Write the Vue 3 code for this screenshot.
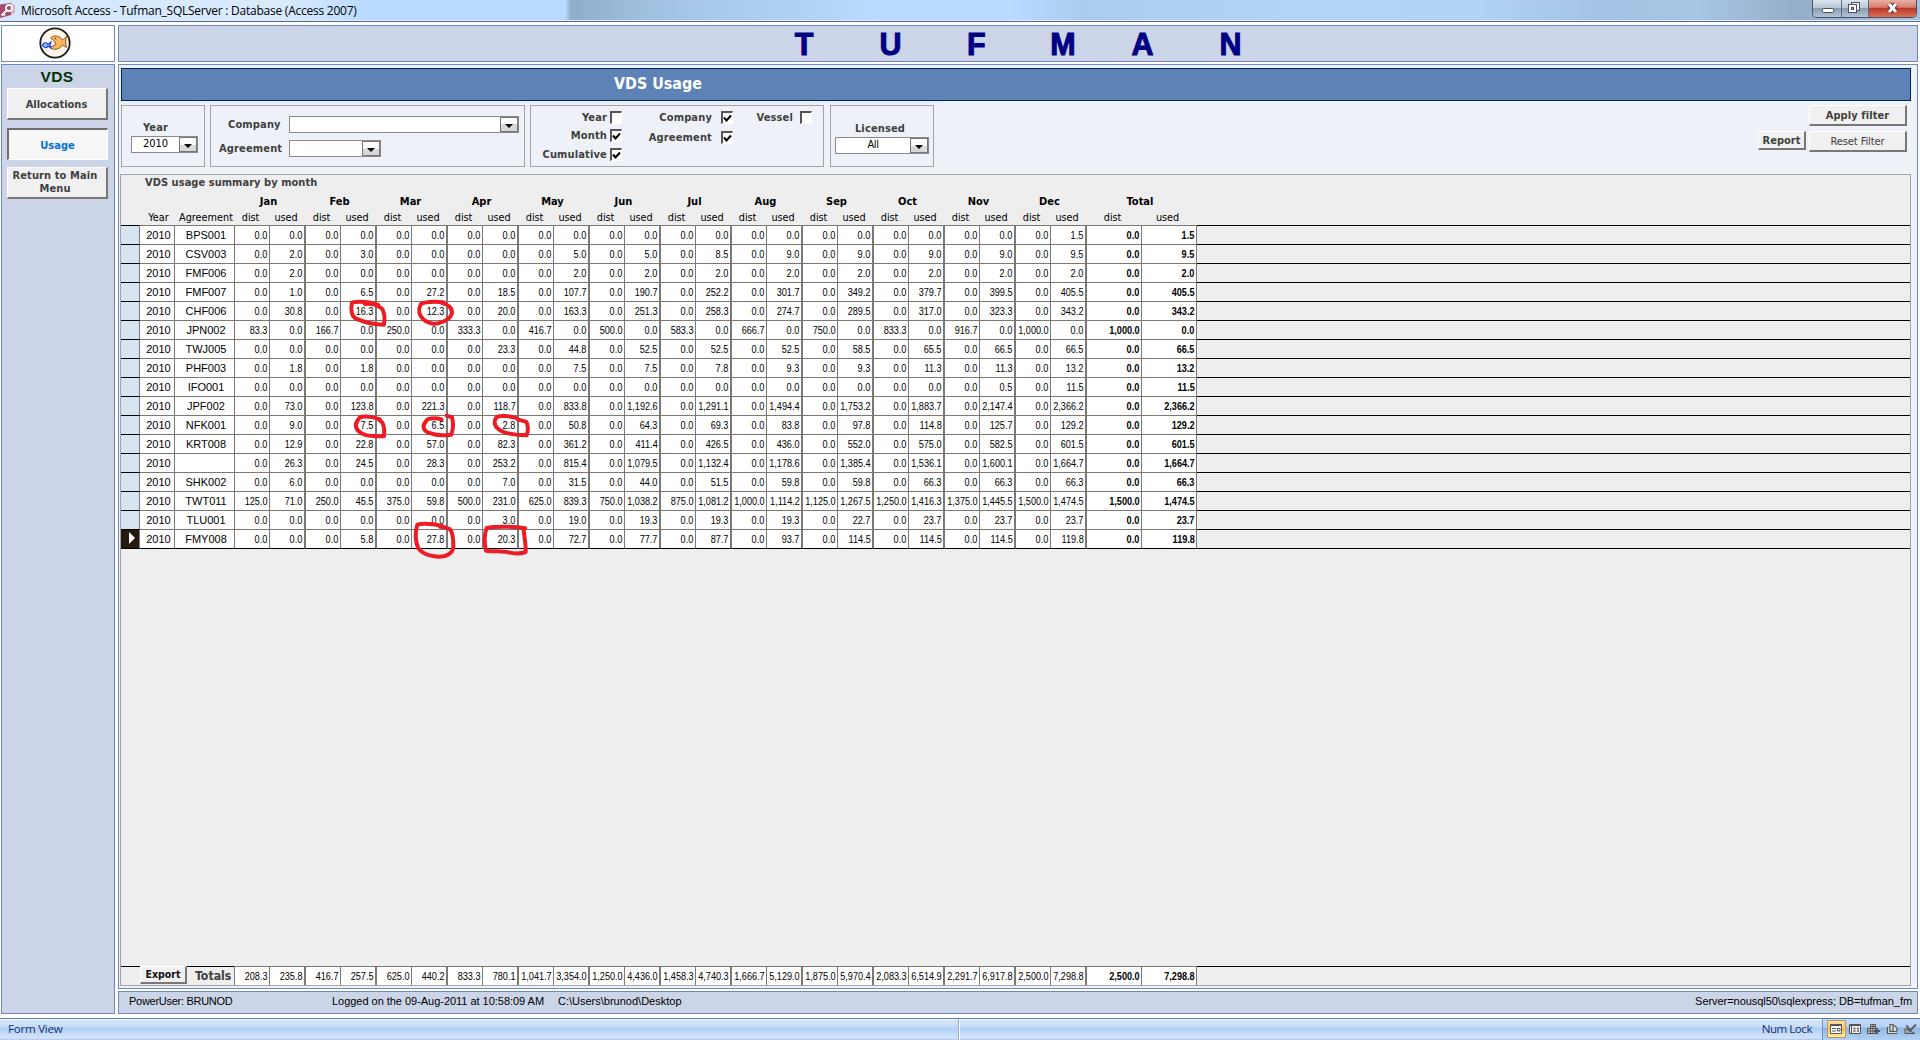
<script setup>
const months = ['Jan', 'Feb', 'Mar', 'Apr', 'May', 'Jun', 'Jul', 'Aug', 'Sep', 'Oct', 'Nov', 'Dec']
const zeros = '0.0 0.0 0.0 0.0 0.0 0.0 0.0 0.0 0.0 0.0 0.0 0.0'

// code | distributed days by month | used days by month | total dist | total used
const source = [
  ['BPS001', zeros, '0.0 0.0 0.0 0.0 0.0 0.0 0.0 0.0 0.0 0.0 0.0 1.5', '0.0', '1.5'],
  ['CSV003', zeros, '2.0 3.0 0.0 0.0 5.0 5.0 8.5 9.0 9.0 9.0 9.0 9.5', '0.0', '9.5'],
  ['FMF006', zeros, '2.0 0.0 0.0 0.0 2.0 2.0 2.0 2.0 2.0 2.0 2.0 2.0', '0.0', '2.0'],
  ['FMF007', zeros, '1.0 6.5 27.2 18.5 107.7 190.7 252.2 301.7 349.2 379.7 399.5 405.5', '0.0', '405.5'],
  ['CHF006', zeros, '30.8 16.3 12.3 20.0 163.3 251.3 258.3 274.7 289.5 317.0 323.3 343.2', '0.0', '343.2'],
  ['JPN002', '83.3 166.7 250.0 333.3 416.7 500.0 583.3 666.7 750.0 833.3 916.7 1,000.0', zeros, '1,000.0', '0.0'],
  ['TWJ005', zeros, '0.0 0.0 0.0 23.3 44.8 52.5 52.5 52.5 58.5 65.5 66.5 66.5', '0.0', '66.5'],
  ['PHF003', zeros, '1.8 1.8 0.0 0.0 7.5 7.5 7.8 9.3 9.3 11.3 11.3 13.2', '0.0', '13.2'],
  ['IFO001', zeros, '0.0 0.0 0.0 0.0 0.0 0.0 0.0 0.0 0.0 0.0 0.5 11.5', '0.0', '11.5'],
  ['JPF002', zeros, '73.0 123.8 221.3 118.7 833.8 1,192.6 1,291.1 1,494.4 1,753.2 1,883.7 2,147.4 2,366.2', '0.0', '2,366.2'],
  ['NFK001', zeros, '9.0 7.5 6.5 2.8 50.8 64.3 69.3 83.8 97.8 114.8 125.7 129.2', '0.0', '129.2'],
  ['KRT008', zeros, '12.9 22.8 57.0 82.3 361.2 411.4 426.5 436.0 552.0 575.0 582.5 601.5', '0.0', '601.5'],
  ['', zeros, '26.3 24.5 28.3 253.2 815.4 1,079.5 1,132.4 1,178.6 1,385.4 1,536.1 1,600.1 1,664.7', '0.0', '1,664.7'],
  ['SHK002', zeros, '6.0 0.0 0.0 7.0 31.5 44.0 51.5 59.8 59.8 66.3 66.3 66.3', '0.0', '66.3'],
  ['TWT011', '125.0 250.0 375.0 500.0 625.0 750.0 875.0 1,000.0 1,125.0 1,250.0 1,375.0 1,500.0', '71.0 45.5 59.8 231.0 839.3 1,038.2 1,081.2 1,114.2 1,267.5 1,416.3 1,445.5 1,474.5', '1,500.0', '1,474.5'],
  ['TLU001', zeros, '0.0 0.0 0.0 3.0 19.0 19.3 19.3 19.3 22.7 23.7 23.7 23.7', '0.0', '23.7'],
  ['FMY008', zeros, '0.0 5.8 27.8 20.3 72.7 77.7 87.7 93.7 114.5 114.5 114.5 119.8', '0.0', '119.8'],
]

function interleave(dist, used) {
  const d = dist.split(' ')
  const u = used.split(' ')
  return d.flatMap((v, i) => [v, u[i]])
}

const rows = source.map(([code, dist, used, td, tu]) => ({ code, cells: interleave(dist, used), td, tu }))
const totals = interleave(
  '208.3 416.7 625.0 833.3 1,041.7 1,250.0 1,458.3 1,666.7 1,875.0 2,083.3 2,291.7 2,500.0',
  '235.8 257.5 440.2 780.1 3,354.0 4,436.0 4,740.3 5,129.0 5,970.4 6,514.9 6,917.8 7,298.8',
)
const letters = ['T', 'U', 'F', 'M', 'A', 'N']
const groups = [
  [['Year', false], ['Month', true], ['Cumulative', true]],
  [['Company', true], ['Agreement', true]],
  [['Vessel', false]],
]
</script>

<template>
  <div class="window">
    <header class="titlebar">
      <svg class="app-icon" width="16" height="18" viewBox="0 0 16 18">
        <path d="M0 3.500 L11 2 V14 L0 17 Z" fill="#a8486a" />
        <path d="M11 2 L15 4 V12 L11 14 Z" fill="#d9b3c0" />
        <circle cx="9" cy="7" r="3" fill="#a8486a" stroke="#fff" stroke-width="1.8" />
        <path d="M7 9 L1.500 14.500 M3 12.500 L5 14.500" stroke="#fff" stroke-width="1.8" />
      </svg>
      <span class="caption">Microsoft Access - Tufman_SQLServer : Database (Access 2007)</span>
      <div class="controls">
        <span class="ctl min">
          <svg width="28" height="17"><rect x="9.5" y="8.5" width="11" height="4" rx="1" fill="#fff" stroke="#4a5362" /></svg>
        </span>
        <span class="ctl max">
          <svg width="26" height="17">
            <rect x="9.5" y="2.5" width="8" height="8" fill="#eef" stroke="#4a5362" />
            <rect x="6.5" y="4.5" width="8" height="8" fill="#fff" stroke="#4a5362" />
            <rect x="9.5" y="7.5" width="2" height="2" fill="#9ab" stroke="#4a5362" />
          </svg>
        </span>
        <span class="ctl close">
          <svg width="47" height="17">
            <path d="M20 4 L27 12 M27 4 L20 12" stroke="#5a3038" stroke-width="5" />
            <path d="M20 4 L27 12 M27 4 L20 12" stroke="#fff" stroke-width="3" />
          </svg>
        </span>
      </div>
    </header>

    <div class="workspace">
      <aside class="left">
        <div class="logo">
          <svg width="32" height="32" viewBox="0 0 32 32">
            <circle cx="16" cy="16" r="14.7" fill="#fdf6ea" stroke="#1c1c1c" stroke-width="1.8" />
            <path d="M11.500 11 C13 8.500 20 7.500 23.500 13 L27.500 9.500 L26.500 15 L27.500 20.500 L23.500 18 C20 23.500 14 23 11 20.500 L17 17.500 L15.500 14 Z" fill="#fbb45a" stroke="#8a6030" stroke-width="1" stroke-linejoin="round" />
            <circle cx="16.500" cy="11.500" r="0.8" fill="#333" />
            <path d="M3.500 18 C4.500 15 8 15 9 17.500 L12 15 L11 18.200 L12 21 L9 19 C8 21.500 4.500 21 3.500 18 Z" fill="#7dc4f5" stroke="#1c35e8" stroke-width="1.1" />
          </svg>
        </div>
        <nav class="side">
          <h2>VDS</h2>
          <button class="nav-btn">Allocations</button>
          <button class="nav-btn active">Usage</button>
          <button class="nav-btn home">Return to Main Menu</button>
        </nav>
      </aside>

      <div class="right">
        <div class="brand"><span v-for="l in letters" :key="l">{{ l }}</span></div>

        <main class="main">
          <h1>VDS Usage</h1>

          <section class="filters">
            <div class="box year">
              <label>Year</label>
              <div class="combo"><span>2010</span><i></i></div>
            </div>
            <div class="box company">
              <div class="line"><label>Company</label><div class="combo wide"><span></span><i></i></div></div>
              <div class="line"><label>Agreement</label><div class="combo mid"><span></span><i></i></div></div>
            </div>
            <div class="box checks">
              <div v-for="(g, gi) in groups" :key="gi" class="group">
                <div v-for="[name, on] in g" :key="name" class="check">
                  <label>{{ name }}</label>
                  <span class="tick"><svg v-if="on" width="9" height="9" viewBox="0 0 9 9"><path d="M1 3.500 L3.500 6.500 L8 1.500" fill="none" stroke="#000" stroke-width="2" /></svg></span>
                </div>
              </div>
            </div>
            <div class="box licensed">
              <label>Licensed</label>
              <div class="combo"><span class="narrow">All</span><i></i></div>
            </div>
            <div class="actions">
              <button class="btn report">Report</button>
              <div class="stack">
                <button class="btn apply">Apply filter</button>
                <button class="btn reset">Reset Filter</button>
              </div>
            </div>
          </section>

          <section class="sheet">
            <h3>VDS usage summary by month</h3>
            <div class="months">
              <b v-for="m in months" :key="m">{{ m }}</b>
              <b class="tot">Total</b>
            </div>
            <div class="grid heads">
              <span></span><span class="h-text">Year</span><span class="h-text">Agreement</span>
              <template v-for="m in months" :key="m"><span>dist</span><span class="h-used">used</span></template>
              <span>dist</span><span class="h-used">used</span>
            </div>
            <div class="body">
              <div v-for="(r, ri) in rows" :key="ri" class="grid row">
                <span class="sel" :class="{ current: ri === rows.length - 1 }">
                  <svg v-if="ri === rows.length - 1" width="8" height="12"><path d="M1 0 L7 6 L1 12 Z" fill="#fff" /></svg>
                </span>
                <span class="cell txt">2010</span>
                <span class="cell txt">{{ r.code }}</span>
                <span v-for="(c, ci) in r.cells" :key="ci" class="cell num" :class="{ thick: ci % 2 }"><span>{{ c }}</span></span>
                <span class="cell num strong"><span>{{ r.td }}</span></span>
                <span class="cell num strong"><span>{{ r.tu }}</span></span>
                <span class="rest"></span>
              </div>
            </div>
            <div class="grid row totals">
              <span class="pad"></span>
              <span class="tlabel"><button class="btn export">Export</button><b>Totals</b></span>
              <span v-for="(c, ci) in totals" :key="ci" class="cell num" :class="{ thick: ci % 2 }"><span>{{ c }}</span></span>
              <span class="cell num strong"><span>2,500.0</span></span>
              <span class="cell num strong"><span>7,298.8</span></span>
              <span class="rest"></span>
            </div>
          </section>
        </main>

        <footer class="info">
          <span class="user">PowerUser: BRUNOD</span>
          <span class="logged">Logged on the 09-Aug-2011 at 10:58:09 AM</span>
          <span class="path">C:\Users\brunod\Desktop</span>
          <span class="server">Server=nousql50\sqlexpress; DB=tufman_fm</span>
        </footer>
      </div>
    </div>

    <div class="status">
      <span class="view">Form View</span>
      <span class="lock">Num Lock</span>
      <div class="views">
        <span class="v on">
          <svg width="12" height="11"><path d="M.5 .5h11v9h-11z" fill="#fff" stroke="#555" /><path d="M.5 1.500h11 M2 4.500h4 M2 7h4" stroke="#555" /><path d="M7.500 4.500h2.500v2.500h-2.500z" fill="none" stroke="#555" /></svg>
        </span>
        <span class="v">
          <svg width="12" height="11"><path d="M.5 .5h11v9h-11z" fill="#eee" stroke="#555" /><path d="M.5 1.500h11 M2.500 1v9" stroke="#555" /><path d="M4.500 4.500h2 M8 4.500h2 M4.500 7h2 M8 7h2" stroke="#555" stroke-width="1.500" /></svg>
        </span>
        <span class="v">
          <svg width="13" height="11"><path d="M3.500 .5h5v9h-5z M.5 4.500h8v5h-8z M3.500 4.500v5 M.5 7h8 M6 .5v9 M3.500 2.500h5" fill="#ccc" stroke="#555" /><path d="M10 4v6 M7 7h6" stroke="#555" stroke-width="1.800" /></svg>
        </span>
        <span class="v">
          <svg width="12" height="11"><path d="M4 .5h3v7h-3z M1.500 3v6.500h10 M7 1.500a4 4 0 0 1 3.500 6h-3.500z" fill="#ddd" stroke="#555" stroke-width="1.200" /></svg>
        </span>
        <span class="v">
          <svg width="13" height="11"><path d="M1 4.500 V9.500 H11 Z" fill="#aaa" stroke="#555" /><path d="M12 .5 L6 6.500 L2.500 1.500" fill="none" stroke="#555" stroke-width="1.800" /></svg>
        </span>
      </div>
    </div>

    <svg class="marks" width="440" height="390" viewBox="0 0 1320 1170">
      <g fill="none" stroke="#ed1c24" stroke-width="12" stroke-linecap="round" stroke-linejoin="round">
        <path d="M805 405 C785 396 745 393 726 398 C721 420 725 440 738 446 C765 458 790 464 822 464 C825 445 825 428 815 415 C800 405 790 400 765 402" />
        <path d="M1000 397 C970 393 940 397 932 403 C923 420 928 437 940 448 C955 460 970 463 985 460 C1005 455 1022 445 1026 430 C1027 415 1015 402 995 399" />
        <path d="M810 748 C780 738 755 738 750 742 C735 758 735 772 745 783 C757 795 770 799 822 799 C824 780 822 757 808 750" />
        <path d="M995 748 C970 742 950 746 948 754 C935 768 940 780 955 788 C975 796 1000 797 1024 794 C1030 775 1030 755 1026 742 L1010 737" />
        <path d="M1218 744 C1200 737 1165 736 1160 741 C1150 755 1153 768 1165 777 C1180 790 1205 795 1250 796 C1256 780 1254 762 1248 755 L1224 749" />
        <path d="M1000 1070 C975 1060 935 1060 922 1064 C915 1085 915 1115 925 1135 C940 1155 975 1164 1005 1158 C1022 1152 1030 1145 1030 1130 C1030 1105 1027 1085 1020 1078 C1010 1072 1000 1070 990 1070" />
        <path d="M1245 1075 C1210 1068 1150 1070 1130 1074 C1123 1090 1122 1120 1128 1142 C1150 1145 1180 1143 1195 1147 C1215 1152 1235 1150 1247 1146 C1248 1125 1243 1100 1241 1080" />
      </g>
    </svg>
  </div>
</template>

<style>
body { margin: 0; background: #fff; }
</style>

<style scoped>
* { box-sizing: border-box; }
.window {
  position: relative; width: 1920px; height: 1040px; display: flex; flex-direction: column; overflow: hidden;
  background: #fff; color: #000; font: 10.6px/13px "DejaVu Sans Condensed", "DejaVu Sans", sans-serif; white-space: nowrap;
}
button, h1, h2, h3 { margin: 0; padding: 0; font: inherit; }

.titlebar {
  height: 22px; flex: none; display: flex; align-items: flex-start; border-bottom: 1px solid #5a6884;
  box-shadow: inset 0 -1px #dfeafa;
  background: linear-gradient(90deg, #d4e7fb 0, #d9ebfd 280px, #b9daff 370px, #b8daff 565px, #8fadca 571px, #9fbfdf 640px, #a9cbec 720px, #b0d2f4 800px, #b9dbff 880px, #b9dbff 1010px, #abcdf0 1080px, #b2d4f7 1300px, #b1d3f6 1480px, #a4c3e4 1600px, #a7c5e4 1700px, #94adc8 1800px, #a9c0dc 1920px);
}
.app-icon { margin-top: 1px; }
.caption { margin-left: 5px; font: 12px/22px "Open Sans", "Noto Sans", sans-serif; letter-spacing: -0.24px; }
.controls { margin-left: auto; margin-right: 3px; display: flex; height: 18px; border: 1px solid #47536a; border-top: 0; border-radius: 0 0 5px 5px; overflow: hidden; }
.ctl { background: linear-gradient(#dbe3ec 0, #b9c6d5 45%, #8b9db3 50%, #b4c3d5 100%); border-right: 1px solid #5c6a80; display: block; }
.ctl svg { display: block; }
.min { width: 29px; }
.max { width: 27px; }
.close { width: 47px; border: 0; background: linear-gradient(#e9b0a5 0, #d67f70 42%, #bb3a26 50%, #d8705c 100%); }

.workspace { flex: 1; display: flex; gap: 3px; padding: 3px 2px 4px 1px; min-height: 0; }
.left { width: 114px; display: flex; flex-direction: column; gap: 2px; }
.right { flex: 1; display: flex; flex-direction: column; gap: 2px; min-width: 0; }
.logo { height: 37px; background: #fff; border: 1px solid #6f88c0; display: flex; justify-content: center; padding-top: 1px; padding-right: 6px; }
.side { flex: 1; background: #ccd4e7; border: 1px solid #6f88c0; display: flex; flex-direction: column; padding: 0 6px 0 5px; }
.side h2 { font: bold 15.5px/23px "Liberation Sans", Arial, sans-serif; color: #003300; text-align: center; height: 23px; letter-spacing: .3px; padding-right: 1px; }
.nav-btn, .btn {
  background: #f0f0f0; color: #404040; font-weight: bold; font-size: 11px;
  border: solid; border-width: 1px 2px 2px 1px; border-color: #fff #777 #777 #fff; text-align: center; display: block;
}
.nav-btn { width: 101px; height: 32px; white-space: normal; line-height: 13px; margin-bottom: 8px; padding: 1px 4px 0 3px; }
.nav-btn.active { color: #0070e0; margin-bottom: 7px; background: repeating-conic-gradient(#fff 0 25%, #efefef 0 50%) 0 0 / 2px 2px; border-width: 2px 1px 1px 2px; border-color: #6d6d6d #fff #fff #6d6d6d; }
.nav-btn.home { padding: 0 7px 1px 3px; letter-spacing: .1px; }

.brand { height: 37px; background: #ccd4e7; border: 1px solid #6f88c0; display: flex; padding-left: 642px; }
.brand span { width: 86px; text-align: center; font: bold 30.5px/37px "Liberation Sans", Arial, sans-serif; color: #000084; -webkit-text-stroke: 1px #000084; }
.brand span:nth-child(2) { width: 87px; }
.brand span:nth-child(3) { width: 84.5px; }
.brand span:nth-child(4) { width: 89px; }
.brand span:nth-child(5) { width: 70px; }
.brand span:nth-child(6) { width: 106px; }

.main { flex: 1; background: #eef2f8; border: 1px solid #6f88c0; padding: 3px 6px 2px 1px; display: flex; flex-direction: column; min-height: 0; }
.main h1 { height: 33px; margin: 0 0 0 1px; background: #5d82b5; border: 1px solid #00245a; color: #fff; font-size: 15.9px; font-weight: bold; line-height: 30px; padding-left: 492px; }

.filters { display: flex; height: 62px; margin: 4px 0 7px 1px; }
.box { border: 1px solid #a2a4a6; flex: none; }
.box label { font-weight: bold; font-size: 11px; color: #404040; letter-spacing: .15px; }
.year { width: 84px; margin-right: 5px; display: flex; flex-direction: column; padding: 14px 0 0 9px; }
.year label { padding-left: 12px; height: 16px; line-height: 15px; }
.combo { height: 17px; background: #fff; border: 1px solid #8a8a8a; display: flex; width: 67px; }
.combo span { flex: 1; text-align: center; line-height: 14px; font-size: 11px; }
.combo .narrow { letter-spacing: -.4px; }
.combo i { width: 18px; height: 15px; border: 1px solid #777; background: linear-gradient(#fdfdfd 50%, #d8d8d8 50%); display: flex; justify-content: center; align-items: flex-end; padding-bottom: 3px; }
.combo i::after { content: ""; border: solid transparent; border-width: 4px 4px 0; border-top-color: #000; }
.company { width: 315px; margin-right: 5px; padding-top: 10px; }
.line { display: flex; height: 24px; }
.line label { width: 78px; padding-left: 17px; line-height: 17px; }
.line + .line label { padding-left: 8px; }
.wide { width: 230px; }
.mid { width: 92px; }
.checks { width: 294px; margin-right: 6px; display: flex; padding-top: 5px; }
.group { display: flex; flex-direction: column; }
.group:nth-child(1) { width: 91px; }
.group:nth-child(2) { width: 111px; }
.group:nth-child(3) { width: 79px; }
.check { display: flex; justify-content: flex-end; align-items: flex-start; height: 20px; gap: 3px; }
.group:nth-child(2) .check { gap: 9px; }
.group:nth-child(3) .check { gap: 7px; }
.check label { line-height: 13px; }
.tick { width: 12px; height: 13px; background: #fff; border: 1px solid; border-width: 2px 1px 1px 2px; border-color: #555 #fff #fff #555; }
.tick svg { display: block; margin-top: 1px; }
.licensed { width: 104px; padding: 15px 0 0 4px; }
.licensed label { display: block; text-align: center; height: 16px; line-height: 15px; padding-right: 8px; }
.licensed .combo { width: 94px; }
.actions { margin-left: auto; margin-right: 4px; display: flex; align-items: flex-start; gap: 3px; }
.report { width: 48px; height: 19px; margin-top: 26px; }
.stack { display: flex; flex-direction: column; gap: 5px; }
.apply, .reset { width: 98px; height: 21px; padding-top: 1px; }
.apply { letter-spacing: .1px; }
.reset { font-weight: normal; letter-spacing: -.1px; }

.sheet { flex: 1; background: #eee; border: 1px solid #a2a4a6; display: flex; flex-direction: column; min-height: 0; }
.sheet h3 { font-weight: bold; font-size: 11px; line-height: 16px; height: 17px; color: #404040; padding: 0 0 0 24px; letter-spacing: .04px; }
.months { display: flex; padding-left: 112px; height: 18px; font-size: 11px; line-height: 19px; }
.months b { width: 71px; text-align: center; }
.months .tot { width: 110px; }
.grid { display: grid; grid-template-columns: 19px 35px 60px repeat(12, 35px 36px) 55px 55px 1fr; }
.heads { height: 15px; line-height: 15px; text-align: center; font-size: 10.8px; letter-spacing: -.1px; }
.heads span { position: relative; left: -2px; }
.heads .h-text { left: 1px; letter-spacing: 0; }
.body { flex: 1; }
.row { height: 19px; }
.row:last-child { height: 20px; }
.sel { border-top: 1px solid #000; border-right: 1px solid #7c7873; background: #d6e4f2; }
.sel.current { background: #241a10; padding: 2px 0 0 7px; line-height: 0; }
.cell { background: #fff; border-top: 1px solid #7c7873; border-right: 1px solid #7c7873; }
.thick { border-right-width: 2px; }
.body .row:last-child .cell, .body .row:last-child .sel, .body .row:last-child .rest { border-bottom: 1px solid #000; }
.txt { font: 11px/18px "Liberation Sans", Arial, sans-serif; text-align: center; padding-left: 3px; }
.num { font: 11px/19px "Liberation Sans", Arial, sans-serif; display: flex; justify-content: flex-end; padding-right: 1.5px; height: 19px; }
.num span { transform: scaleX(.83); transform-origin: 100% 50%; }
.body .row:last-child .num { height: 20px; }
.strong { font-weight: bold; }
.rest { border-top: 1px solid #000; }
.totals.row { height: 19px; flex: none; }
.pad { border-top: 1px solid #000; }
.tlabel { grid-column: 2 / 4; display: flex; border-right: 1px solid #7c7873; }
.tlabel b { flex: 1; font-size: 12.2px; line-height: 19px; color: #404040; border-top: 1px solid #000; padding-left: 8px; height: 19px; }
.export { width: 47px; height: 18px; color: #111; font-size: 10.500px; line-height: 13px; }

.info { height: 23px; background: #ccd4e7; border: 1px solid #6f88c0; display: flex; font: 11px/19px "Liberation Sans", Arial, sans-serif; padding: 0 5px 0 10px; }
.user { width: 203px; letter-spacing: -.28px; }
.logged { width: 226px; letter-spacing: -.03px; }
.server { margin-left: auto; letter-spacing: -.05px; }

.status { height: 22px; flex: none; display: flex; border-top: 1px solid #567db1; box-shadow: inset 0 1px #fff; background: linear-gradient(#fff 0 1px, #d7e6f9 1px, #c5dbf7 8px, #b0cff7 9px, #d4e4fa 19px, #a9c6e8 21px); font: 11.6px/20px "Open Sans", "Noto Sans", sans-serif; color: #15306b; }
.view { width: 959px; padding-left: 8px; border-right: 1px solid #8fadd5; letter-spacing: -.25px; }
.lock { flex: 1; text-align: right; padding-right: 10px; border-left: 1px solid #fff; border-right: 1px solid #6f93c4; letter-spacing: -.5px; }
.views { width: 97px; display: flex; padding: 1px 0 0 4px; background: linear-gradient(#c3dcf8 0, #b3d0f3 8px, #8fb6e6 9px, #b4d1f3 21px); }
.v { width: 18.500px; height: 18px; display: flex; align-items: center; justify-content: center; }
.v.on { background: linear-gradient(#fbe0a8, #fdbd58 50%, #fff0a0); border: 1px solid #b99a63; }

.marks { position: absolute; left: 110px; top: 170px; pointer-events: none; }
</style>
